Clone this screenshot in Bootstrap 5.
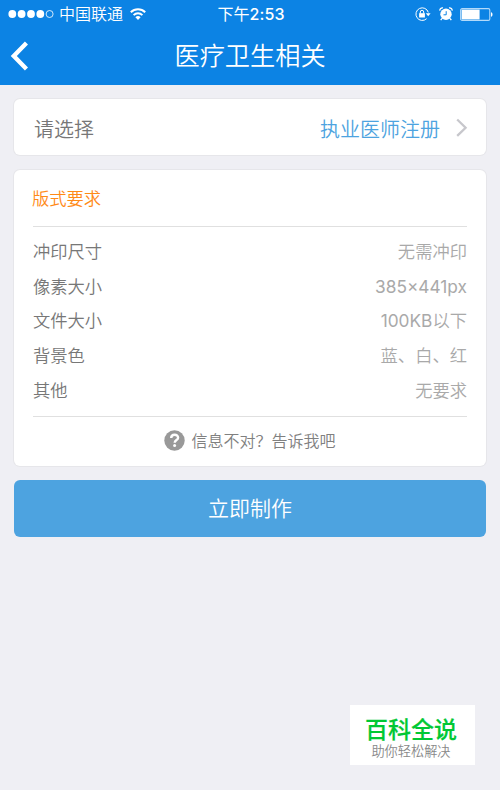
<!DOCTYPE html>
<html lang="zh-CN">
<head>
<meta charset="utf-8">
<meta name="viewport" content="width=device-width, initial-scale=1">
<title>医疗卫生相关</title>
<link href="https://cdn.jsdelivr.net/npm/bootstrap@5.3.0/dist/css/bootstrap.min.css" rel="stylesheet">
<style>
body{width:500px;height:790px;overflow:hidden;background:#efeff4;font-family:Inter,"Noto Sans CJK SC",sans-serif;font-weight:350;color:#777}
svg{display:block;flex:none}
.top-area{height:85px;background:#0c83e4;color:#fff}
.status-row{height:27px;font-size:16px;line-height:27px;padding:0 7px 0 8px;display:grid;grid-template-columns:1fr auto 1fr}
.carrier{padding-top:1px}
.clock{font-weight:500;font-size:16px;letter-spacing:.1px;padding:1px 0 0 1px}
.clock span{font-weight:400;font-size:16px}
.title-row{height:58px;padding:0 10px;display:grid;grid-template-columns:30px 1fr 30px;align-items:center}
.title-row h1{font-size:25.2px;font-weight:350;line-height:58px}
.content-area{padding:14px 14px 0}
.panel{border:0;border-radius:6px;box-shadow:0 0 0 1px #e6e6ea}
.select-row{height:56px;margin-bottom:15px;padding:5px 18px 0 20px;font-size:20px}
.select-row svg{margin-bottom:4px}
.link-value{color:#4da3e0;margin-right:16px}
.spec-panel{height:296px;padding:0 19px;font-size:17.3px}
.spec-title{color:#ff8a17;height:56px;line-height:57px;margin-left:-1px}
.spec-list{border-top:1px solid #e0e0e0;border-bottom:1px solid #e0e0e0;height:191px;padding-top:8px}
.spec-list dt,.spec-list dd{font-weight:350;margin:0;line-height:34.7px}
.spec-list dd{color:#a9a9a9}
.spec-list .latin{font-weight:400}
.latin span{font-weight:350}
.feedback{height:49px;font-size:16px;color:#808080}
.feedback span{margin:-2px 0 0 6px}
.feedback svg{margin-top:-2px}
.make-btn{height:57px;margin-top:14px;background:#4da3e0;color:#fff;border:0;border-radius:6px;font-size:21px;font-weight:350}
.site-tag{position:absolute;left:350px;top:705px;width:125px;height:60px;padding-right:3px;background:#fff}
.site-tag strong{font-size:23px;line-height:28px;color:#00c834;font-weight:500;-webkit-text-stroke:.2px #00c834;margin-top:11px}
.site-tag span{font-size:13.2px;line-height:15px;color:#888}
</style>
<script src="https://cdn.jsdelivr.net/npm/bootstrap@5.3.0/dist/js/bootstrap.bundle.min.js"></script>
</head>
<body>
<header class="top-area">
  <div class="status-row align-items-center">
    <div class="d-flex align-items-center">
      <svg width="47" height="12" viewBox="0 0 47 12" fill="#fff"><circle cx="4.3" cy="6" r="3.9"/><circle cx="13.6" cy="6" r="3.9"/><circle cx="23" cy="6" r="3.9"/><circle cx="32.3" cy="6" r="3.9"/><circle cx="41.6" cy="6" r="3.5" fill="none" stroke="#fff" stroke-width=".8"/></svg>
      <span class="carrier ms-1">中国联通</span>
      <svg style="margin-left:7px" width="16" height="12" viewBox="0 0 16 12" fill="none" stroke="#fff" stroke-width="2"><path d="M.8 4.2a10.3 10.3 0 0 1 14.4 0M3.6 7.1a6.3 6.3 0 0 1 8.8 0"/><path d="M8 12 5.4 9.3a3.8 3.8 0 0 1 5.2 0z" fill="#fff" stroke="none"/></svg>
    </div>
    <div class="clock"><span>下午</span>2:53</div>
    <div class="d-flex align-items-center justify-content-end">
      <svg width="16" height="14" viewBox="0 0 16 14" fill="none" stroke="#fff"><path d="M13.3 5.4A6.3 6.3 0 1 0 11.6 11.7" stroke-width="1"/><path d="M10.8 6.2h4.8l-2.4 3z" fill="#fff" stroke="none"/><path d="M4.1 6.2h5.8v4.3H4.1z" fill="#fff" stroke="none"/><path d="M5.3 6.5V5a1.7 1.7 0 0 1 3.4 0v1.5"/></svg>
      <svg style="margin-left:8px" width="14" height="14" viewBox="0 0 14 14" fill="#fff"><circle cx="7" cy="7.3" r="5.7"/><path d="M.9 3.7A2.5 2.5 0 0 1 4 .9M10 .9a2.5 2.5 0 0 1 3.1 2.8M3 11.3l-1.3 1.8M11 11.3l1.3 1.8" stroke="#fff" stroke-width="1.3" fill="none"/><path d="M7.2 4.2v3.6H4.5" fill="none" stroke="#0c83e4"/></svg>
      <svg style="margin-left:7px" width="33" height="13" viewBox="0 0 33 13"><rect x=".6" y=".6" width="29.2" height="11.8" rx="1.5" fill="none" stroke="#b3dafa" stroke-width="1.1"/><path d="M1.6 1.6h18v9.8h-18z" fill="#fff"/><path d="M31 4.2c2 .5 2 4.1 0 4.6z" fill="#fff"/></svg>
    </div>
  </div>
  <div class="title-row">
    <svg width="18" height="30" viewBox="0 0 18 30" fill="none" stroke="#fff" stroke-width="4.4"><path d="M16.5 2 3.8 15l12.7 13"/></svg>
    <h1 class="text-center m-0">医疗卫生相关</h1>
  </div>
</header>
<main class="content-area">
  <section class="card panel select-row flex-row align-items-center">
    <span>请选择</span>
    <span class="link-value ms-auto">执业医师注册</span>
    <svg width="12" height="20" viewBox="0 0 12 20" fill="none" stroke="#c7c7cc" stroke-width="2.3"><path d="m1.2 1.5 8.4 8.2-8.4 8.2"/></svg>
  </section>
  <section class="card panel spec-panel">
    <div class="spec-title">版式要求</div>
    <dl class="spec-list mb-0">
      <div class="d-flex justify-content-between"><dt>冲印尺寸</dt><dd>无需冲印</dd></div>
      <div class="d-flex justify-content-between"><dt>像素大小</dt><dd class="latin">385×441px</dd></div>
      <div class="d-flex justify-content-between"><dt>文件大小</dt><dd class="latin">100KB<span>以下</span></dd></div>
      <div class="d-flex justify-content-between"><dt>背景色</dt><dd>蓝、白、红</dd></div>
      <div class="d-flex justify-content-between"><dt>其他</dt><dd>无要求</dd></div>
    </dl>
    <div class="feedback d-flex align-items-center justify-content-center">
      <svg width="21" height="21" viewBox="0 0 21 21"><circle cx="10.5" cy="10.5" r="10.2" fill="#999"/><path d="M7.2 8.1c0-4.4 6.9-4.4 6.9-.4 0 2.5-3.4 2.3-3.4 5.1" fill="none" stroke="#fff" stroke-width="2.4"/><circle cx="10.6" cy="15.6" r="1.5" fill="#fff"/></svg>
      <span>信息不对？告诉我吧</span>
    </div>
  </section>
  <button class="btn make-btn w-100 p-0" type="button">立即制作</button>
</main>
<aside class="site-tag d-flex flex-column align-items-center"><strong>百科全说</strong><span>助你轻松解决</span></aside>
</body>
</html>
